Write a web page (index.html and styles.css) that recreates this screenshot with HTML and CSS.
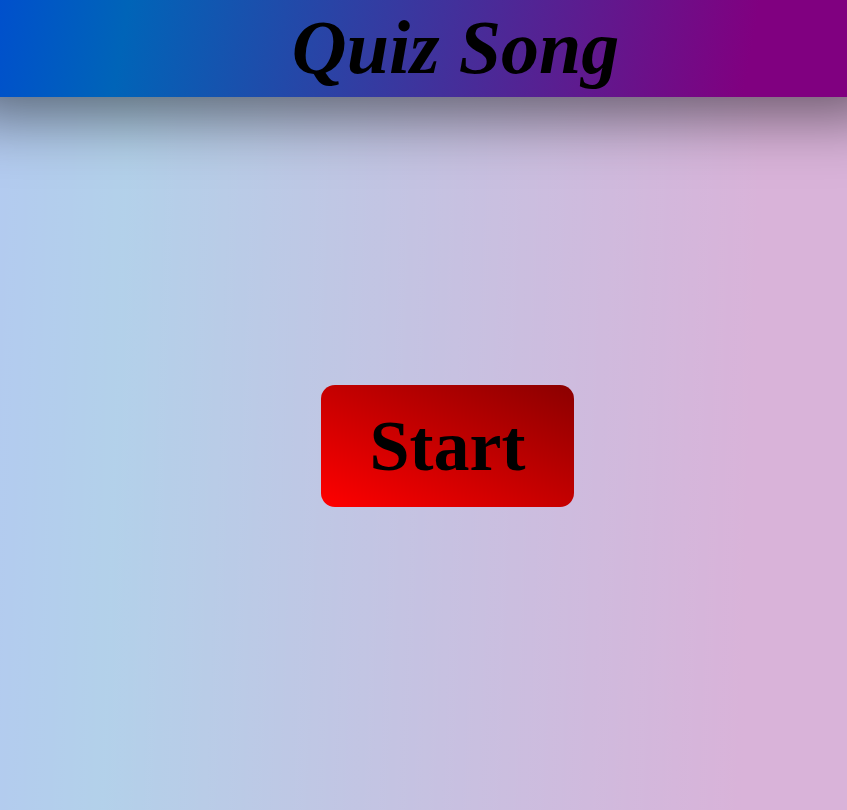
FILE: index.html
```html
<!DOCTYPE html>
<html lang="en">
<head>
<meta charset="utf-8">
<title>Quiz Song</title>
<link rel="stylesheet" href="styles.css">
</head>
<body>
<header class="topbar">
  <h1 class="title">Quiz Song</h1>
</header>
<main class="stage">
  <button class="start-btn" type="button">Start</button>
</main>
</body>
</html>
```

FILE: styles.css
```css
html, body {
  height: 100%;
}
body {
  margin: 0;
  display: flex;
  flex-direction: column;
  font-family: "Liberation Serif", "Times New Roman", serif;
  background-color: #fff;
  background-image:
    linear-gradient(rgba(255,255,255,0.7), rgba(255,255,255,0.7)),
    linear-gradient(92deg, #0050cc 0%, #0064b8 15%, #800080 88%, #800080 100%);
}
.topbar {
  position: relative;
  z-index: 1;
  height: 97px;
  display: flex;
  justify-content: center;
  align-items: flex-start;
  background: linear-gradient(100deg, #0050cc 0%, #0064b8 15%, #800080 88%, #800080 100%);
  box-shadow: 0 -20px 60px 40px rgba(0,0,0,0.5);
}
.title {
  margin: 0;
  padding-left: 64px;
  font-size: 76px;
  line-height: 94px;
  font-weight: bold;
  font-style: italic;
  color: #000;
}
.stage {
  flex: 1;
  display: flex;
  justify-content: center;
  align-items: center;
  padding-left: 48px;
  padding-bottom: 15px;
}
.start-btn {
  font-family: "Liberation Serif", "Times New Roman", serif;
  font-size: 72px;
  font-weight: bold;
  color: #000;
  line-height: 82px;
  padding: 20px 49px;
  border: none;
  border-radius: 14px;
  background: linear-gradient(to top right, #ff0000, #8b0000);
  cursor: pointer;
}
```
